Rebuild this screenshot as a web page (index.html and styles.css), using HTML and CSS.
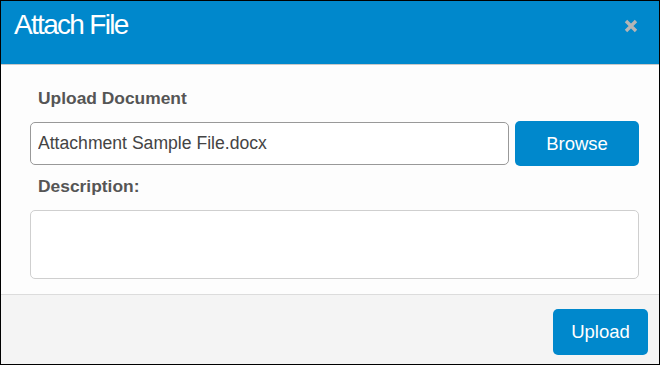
FILE: index.html
```html
<!DOCTYPE html>
<html lang="en">
<head>
    <meta charset="UTF-8">
    <meta name="viewport" content="width=device-width, initial-scale=1.0">
    <title>Attach File</title>
    <link rel="stylesheet" href="styles.css">
</head>
<body>
    <div class="modal">
        <div class="modal-header">
            <h1>Attach File</h1>
            <button class="close-button" aria-label="Close">
                <svg width="14" height="14" viewBox="0 0 14 14">
                    <path d="M2 2 L12 12 M12 2 L2 12" stroke="#b5b5b5" stroke-width="3.4" fill="none"/>
                </svg>
            </button>
        </div>

        <div class="modal-body">
            <label for="file-name">Upload Document</label>
            <div class="file-row">
                <input type="text" id="file-name" value="Attachment Sample File.docx" readonly>
                <button class="btn">Browse</button>
            </div>

            <label for="description">Description:</label>
            <textarea id="description"></textarea>
        </div>

        <div class="modal-footer">
            <button class="btn btn-upload">Upload</button>
        </div>
    </div>
</body>
</html>
```

FILE: styles.css
```css
* {
    box-sizing: border-box;
}

body {
    margin: 0;
    font-family: "Liberation Sans", Arial, sans-serif;
}

/* dialog frame */
.modal {
    width: 660px;
    height: 365px;
    border: 1px solid #000;
    display: flex;
    flex-direction: column;
    background: #fdfdfd;
}

/* header */
.modal-header {
    height: 64px;
    background: #0088cc;
    border-bottom: 1px solid #c8c8c8;
    padding: 8px 21px 0 13px;
    display: flex;
    justify-content: space-between;
    align-items: flex-start;
}

.modal-header h1 {
    margin: 0;
    color: #fff;
    font-size: 28px;
    line-height: 32px;
    font-weight: normal;
    letter-spacing: -1.7px;
}

.close-button {
    background: none;
    border: none;
    padding: 0;
    margin-top: 10px;
    width: 14px;
    height: 14px;
    cursor: pointer;
}

.close-button svg {
    display: block;
}

/* body */
.modal-body {
    padding: 23px 20px 15px 29px;
    display: flex;
    flex-direction: column;
    border-bottom: 1px solid #dcdcdc;
}

.modal-body label {
    display: block;
    margin-left: 8px;
    font-size: 17.4px;
    line-height: 20px;
    font-weight: bold;
    color: #555;
}

.file-row {
    display: flex;
    align-items: center;
    gap: 6px;
    margin: 13px 0 10px;
}

.file-row input {
    flex: 1;
    height: 43px;
    border: 1px solid #999;
    border-radius: 5px;
    padding: 0 7px;
    font-family: inherit;
    font-size: 17.6px;
    color: #444;
    background: #fff;
}

.btn {
    background: #0088cc;
    color: #fff;
    border: none;
    border-radius: 5px;
    font-family: inherit;
    font-size: 18.5px;
    cursor: pointer;
}

.file-row .btn {
    width: 124px;
    height: 45px;
}

.modal-body textarea {
    margin-top: 14px;
    height: 69px;
    border: 1px solid #cfcfcf;
    border-radius: 5px;
    resize: none;
    background: #fff;
}

/* footer */
.modal-footer {
    flex: 1;
    background: #f4f4f4;
    padding: 14px 11px 0 0;
    display: flex;
    justify-content: flex-end;
    align-items: flex-start;
}

.btn-upload {
    width: 95px;
    height: 46px;
}
```
